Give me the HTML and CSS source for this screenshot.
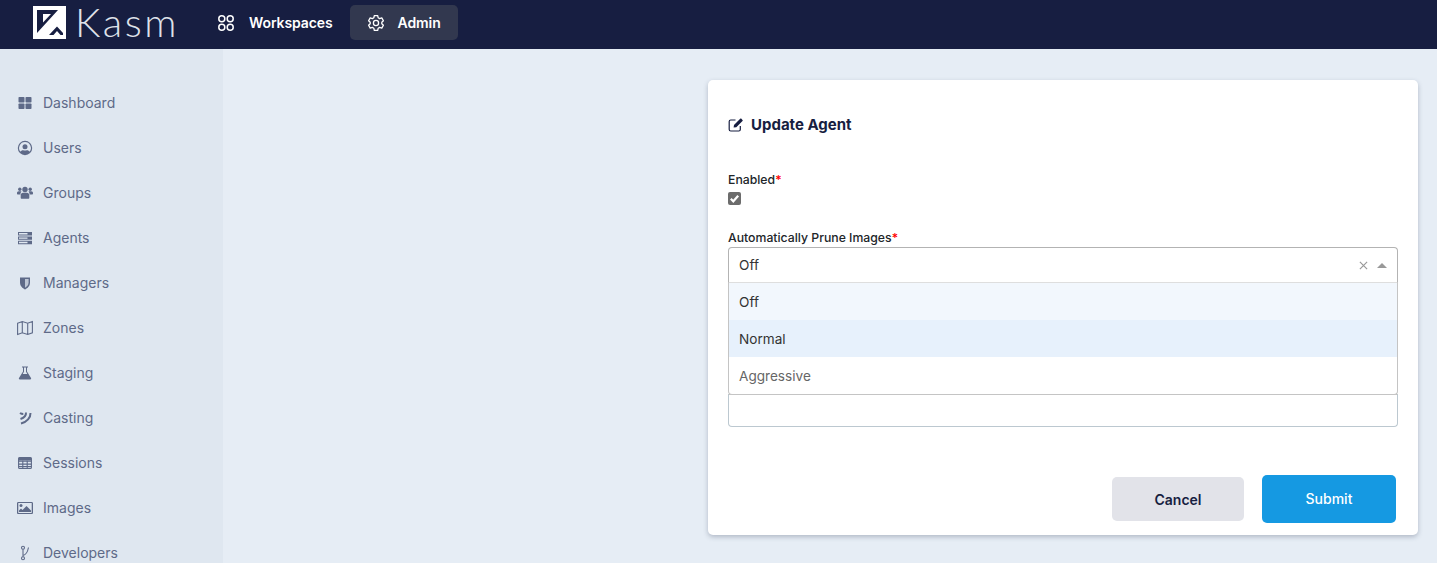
FILE: index.html
```html
<!DOCTYPE html>
<html lang="en">
<head>
<meta charset="utf-8">
<title>Kasm - Update Agent</title>
<link rel="stylesheet" href="styles.css">
</head>
<body>
<header class="topbar">
  <a class="logo">
    <svg class="logo-mark" viewBox="0 0 33 33" width="33" height="33">
      <rect width="33" height="33" fill="#fff"/>
      <path fill="#171e41" d="M4 4H25L4 27ZM16 29 24 20.500 30 27V29H27.500L24 25 20.500 29Z"/>
      <path fill="#fff" d="M10 8H18L10 16.500Z"/>
    </svg>
    <span class="logo-text">Kasm</span>
  </a>
  <nav class="topnav">
    <a class="topnav-item">
      <svg class="topnav-icon" viewBox="0 0 18 18" width="18" height="18" fill="none" stroke="#fff" stroke-width="1.5"><circle cx="4.8" cy="4.8" r="3"/><circle cx="13.2" cy="4.8" r="3"/><circle cx="4.8" cy="13.2" r="3"/><circle cx="13.2" cy="13.2" r="3"/></svg>
      <span>Workspaces</span>
    </a>
    <a class="topnav-item active">
      <svg class="topnav-icon" viewBox="0 0 18 18" width="18" height="18" fill="none" stroke="#fff" stroke-width="1.3" stroke-linejoin="round"><path d="M7.3 1.6h3.4l.5 2.2 1.4.8 2.2-.7 1.6 2.9-1.6 1.5v1.4l1.6 1.5-1.6 2.9-2.2-.7-1.4.8-.5 2.2H7.3l-.5-2.2-1.4-.8-2.2.7-1.6-2.9 1.6-1.5V8.3L1.6 6.8l1.6-2.9 2.2.7 1.4-.8z"/><circle cx="9" cy="9" r="2.6"/></svg>
      <span>Admin</span>
    </a>
  </nav>
</header>
<div class="layout">
  <aside class="sidebar">
    <a class="side-item">
      <svg class="side-icon" viewBox="0 0 16 16"><rect x="1.500" y="2" width="6" height="5.500" rx=".8"/><rect x="8.500" y="2" width="6" height="5.500" rx=".8"/><rect x="1.500" y="8.500" width="6" height="5.500" rx=".8"/><rect x="8.500" y="8.500" width="6" height="5.500" rx=".8"/></svg>
      <span>Dashboard</span>
    </a>
    <a class="side-item">
      <svg class="side-icon" viewBox="0 0 16 16"><path fill-rule="evenodd" d="M8 .8a7.2 7.2 0 1 0 0 14.4A7.2 7.2 0 0 0 8 .8Zm0 1.300a5.900 5.900 0 0 1 4.600 9.600c-.6-1-1.600-1.500-2.600-1.500-.7 0-1 .3-2 .3s-1.300-.3-2-.3c-1 0-2 .5-2.600 1.500A5.900 5.900 0 0 1 8 2.100Z"/><circle cx="8" cy="6.800" r="2.500"/></svg>
      <span>Users</span>
    </a>
    <a class="side-item">
      <svg class="side-icon" viewBox="0 0 16 16"><circle cx="2.800" cy="4.300" r="1.700"/><circle cx="13.200" cy="4.300" r="1.700"/><circle cx="8" cy="4.500" r="2.700"/><path d="M0 8c0-1 .7-1.800 1.700-1.800h1.800c.4 0 .7.100 1 .4-.6.600-1.100 1.700-1.100 3H1c-.6 0-1-.4-1-1ZM16 8c0-1-.7-1.800-1.700-1.800h-1.800c-.4 0-.7.100-1 .4.600.6 1.100 1.700 1.100 3H15c.6 0 1-.4 1-1ZM6 7.800h4c1.300 0 2.300 1 2.300 2.300v2.700c0 .6-.4 1-1 1H4.700c-.6 0-1-.4-1-1v-2.700C3.700 8.800 4.700 7.800 6 7.800Z"/></svg>
      <span>Groups</span>
    </a>
    <a class="side-item">
      <svg class="side-icon" viewBox="0 0 16 16"><path fill-rule="evenodd" d="M1 2h14v3.400H1Zm1 1v1.400h8.500V3ZM1 6.400h14v3.400H1Zm1 1v1.400h8.500V7.400ZM1 10.800h14v3.400H1Zm1 1v1.400h8.500v-1.400Z"/></svg>
      <span>Agents</span>
    </a>
    <a class="side-item">
      <svg class="side-icon" viewBox="0 0 16 16"><path d="M3 2.500h10v5c0 3.500-2.500 5.700-5 7-2.500-1.300-5-3.500-5-7Z"/><path class="shield-light" d="M8 4v8.700c1.800-1 3.600-2.600 3.600-5.200V4Z"/></svg>
      <span>Managers</span>
    </a>
    <a class="side-item">
      <svg class="side-icon side-outline" viewBox="0 0 16 16"><path d="M.6 3.200 5.300 1.500l5.400 1.700 4.700-1.700v11.300l-4.700 1.700-5.400-1.700L.6 14.500ZM5.300 1.500v11.300M10.700 3.200v11.300"/></svg>
      <span>Zones</span>
    </a>
    <a class="side-item">
      <svg class="side-icon" viewBox="0 0 16 16"><path d="M5 1.500h6v1H10v4l4 6.500c.4.700 0 1.500-.8 1.500H2.800c-.8 0-1.200-.8-.8-1.500L6 6.500v-4H5Zm2 1v4.300L5.700 9h4.600L9 6.800V2.500Z"/></svg>
      <span>Staging</span>
    </a>
    <a class="side-item">
      <svg class="side-icon side-outline side-cast" viewBox="0 0 16 16"><path d="M3 3c1 .7 2 1 3.300 1M9 2.500c.2 2.800-2 5.300-5.500 6.500M13.500 3c.2 4.500-3.500 9-9.500 10.500"/></svg>
      <span>Casting</span>
    </a>
    <a class="side-item">
      <svg class="side-icon side-outline" viewBox="0 0 16 16"><rect x="1.600" y="2.600" width="12.800" height="10.800" rx="1"/><path d="M1.600 6.300h12.800M1.600 9.100h12.800M1.600 11.500h12.800M5.800 5.500v7.900M10.200 5.500v7.900"/><path class="grid-head" d="M1.600 2.600h12.800v3H1.600Z"/></svg>
      <span>Sessions</span>
    </a>
    <a class="side-item">
      <svg class="side-icon" viewBox="0 0 16 16"><path fill-rule="evenodd" d="M1.300 2h13.400c.7 0 1.300.6 1.300 1.300v9.400c0 .7-.6 1.300-1.300 1.300H1.300C.6 14 0 13.400 0 12.700V3.300C0 2.600.6 2 1.300 2Zm0 1.100v9.800h13.400V3.100Z"/><circle cx="4" cy="5.500" r="1.500"/><path d="M2 12V10.500l2-2 1.500 1.500 4-4 4.500 4.500V12Z"/></svg>
      <span>Images</span>
    </a>
    <a class="side-item">
      <svg class="side-icon side-outline" viewBox="0 0 16 16"><circle cx="6" cy="2.800" r="1.500"/><circle cx="6" cy="13.200" r="1.500"/><path d="M6 4.300v7.400M6 10.500c2.500-.5 4.500-3 5.500-8"/></svg>
      <span>Developers</span>
    </a>
  </aside>
  <main class="content">
    <section class="card">
      <h1 class="card-title">
        <svg class="title-icon" viewBox="0 0 16 16" width="16" height="16"><path fill="none" stroke="#171e41" stroke-width="1.200" d="M7.500 3H2.800C1.800 3 1.200 3.600 1.200 4.500v8c0 1 .6 1.500 1.600 1.500h8c.9 0 1.500-.6 1.500-1.500V9"/><path fill="#171e41" d="M6 8 12.200 1.800c.4-.4.9-.4 1.200 0l1.100 1.100c.4.400.4.800 0 1.200L8.300 10.300l-2.700.3Z"/></svg>
        <span>Update Agent</span>
      </h1>
      <form class="form">
        <div class="field field-check">
          <label class="label">Enabled<span class="req">*</span></label>
          <span class="checkbox">
            <svg viewBox="0 0 13 13" width="13" height="13"><path fill="none" stroke="#fff" stroke-width="2.200" d="M2.800 6.800 5.300 9.300 10.200 3.800"/></svg>
          </span>
        </div>
        <div class="field field-select">
          <label class="label">Automatically Prune Images<span class="req">*</span></label>
          <div class="select">
            <div class="select-control">
              <span class="select-value">Off</span>
              <svg class="select-clear" viewBox="0 0 10 10" width="9" height="9"><path fill="none" stroke="#999" stroke-width="1.300" d="M1 1 9 9M9 1 1 9"/></svg>
              <span class="select-arrow"></span>
            </div>
            <ul class="select-menu">
              <li class="option option-selected">Off</li>
              <li class="option option-hover">Normal</li>
              <li class="option option-plain">Aggressive</li>
            </ul>
          </div>
        </div>
        <div class="text-input"></div>
        <div class="actions">
          <button type="button" class="btn btn-cancel">Cancel</button>
          <button type="button" class="btn btn-submit">Submit</button>
        </div>
      </form>
    </section>
  </main>
</div>
</body>
</html>
```
FILE: styles.css
```css
* { box-sizing: border-box; }
html, body { margin: 0; height: 100%; overflow: hidden; }
body {
  font-family: Inter, "Liberation Sans", sans-serif;
  background: #e6edf5;
  color: #171e41;
  display: flex;
  flex-direction: column;
}
.topbar {
  flex: 0 0 49px;
  height: 49px;
  background: #171e41;
  display: flex;
  align-items: flex-start;
  padding-left: 33px;
}
.logo { display: flex; align-items: center; height: 45px; gap: 9px; width: 167px; }
.logo-mark { flex: none; }
.logo-text {
  font-family: Lato, sans-serif;
  font-weight: 300;
  font-size: 40px;
  line-height: 45px;
  letter-spacing: 2.600px;
  color: #dfe2ea;
}
.topnav { display: flex; align-items: center; padding-top: 5px; }
.topnav-item {
  display: flex;
  align-items: center;
  height: 35px;
  padding: 0 17px;
  gap: 14px;
  border-radius: 5px;
  color: #fff;
  font-size: 14px;
  font-weight: 600;
  letter-spacing: -.1px;
}
.topnav-item.active { background: #32384f; padding: 0 17px; gap: 13px; }
.topnav-icon { flex: none; }
.layout { flex: 1; display: flex; min-height: 0; }
.sidebar {
  flex: 0 0 223px;
  background: #dfe7f0;
  padding: 31px 0 0 17px;
  overflow: hidden;
}
.side-item {
  display: flex;
  align-items: center;
  height: 45px;
  color: #5e6a88;
  font-size: 14px;
  font-weight: 400;
  gap: 10px;
}
.side-icon { flex: none; width: 16px; height: 16px; fill: #5e6a88; }
.side-outline { fill: none; stroke: #5e6a88; stroke-width: 1.100; }
.side-cast { stroke-width: 2; }
.shield-light { fill: #dfe7f0; opacity: .75; }
.grid-head { fill: #5e6a88; stroke: none; }
.content { flex: 1; padding: 31px 19px 0 485px; min-width: 0; }
.card {
  height: 455px;
  background: #fff;
  border-radius: 5px;
  box-shadow: 0 2px 5px rgba(40, 50, 80, .28);
  padding: 35px 20px 0;
}
.card-title {
  margin: 0;
  display: flex;
  align-items: center;
  gap: 7px;
  font-size: 15px;
  line-height: 20px;
  font-weight: 700;
  color: #171e41;
}
.title-icon { flex: none; }
.form { margin-top: 37px; display: flex; flex-direction: column; }
.field { display: flex; flex-direction: column; }
.label { font-size: 12.250px; line-height: 15px; font-weight: 500; color: #212529; }
.req { color: #f00; }
.field-check { gap: 5px; }
.checkbox {
  width: 13px;
  height: 13px;
  background: #6c6c6c;
  border-radius: 2px;
  display: block;
}
.checkbox svg { display: block; }
.field-select { margin-top: 25px; gap: 2px; }
.select { position: relative; }
.select-control {
  height: 36px;
  border: 1px solid #b3b3b3;
  border-bottom-color: #dedede;
  border-radius: 4px 4px 0 0;
  background: #fff;
  display: flex;
  align-items: center;
  padding: 0 10px;
  font-size: 13.600px;
  color: #333;
}
.select-value { flex: 1; }
.select-clear { flex: none; margin-right: 9px; }
.select-arrow {
  width: 0;
  height: 0;
  border-left: 5px solid transparent;
  border-right: 5px solid transparent;
  border-bottom: 5px solid #999;
}
.select-menu {
  position: absolute;
  left: 0;
  right: 0;
  top: 36px;
  z-index: 2;
  margin: 0;
  padding: 0;
  list-style: none;
  background: #fff;
  border: 1px solid #c4c4c4;
  border-top: 0;
  border-radius: 0 0 4px 4px;
  font-size: 13.600px;
}
.option { height: 37px; line-height: 39px; padding-left: 10px; color: #333; }
.option-selected { background: #f2f7fd; }
.option-hover { background: #e7f1fc; }
.option-plain { color: #666; }
.text-input {
  margin-top: 111px;
  height: 33px;
  border: 1px solid #bcc8d0;
  border-top-color: #c4c4c4;
  border-radius: 0 0 4px 4px;
}
.actions {
  margin-top: 48px;
  margin-right: 2px;
  display: flex;
  justify-content: flex-end;
  align-items: center;
  gap: 18px;
}
.btn {
  font-family: inherit;
  font-size: 14px;
  font-weight: 600;
  border: 0;
  border-radius: 5px;
  cursor: pointer;
}
.btn-cancel { width: 132px; height: 44px; background: #e2e3e9; color: #171e41; }
.btn-submit { width: 134px; height: 48px; padding-bottom: 3px; background: #1599e2; color: #fff; font-weight: 500; }
```
